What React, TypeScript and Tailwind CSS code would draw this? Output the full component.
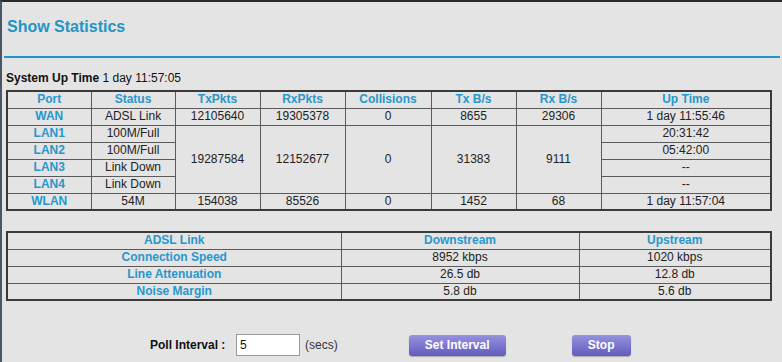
import React from "react";

const th = "border border-[#5a5a5a] text-[#2797cc] font-bold text-center h-[17px] p-0 leading-[15px]";
const td = "border border-[#5a5a5a] text-[#222] text-center h-[17px] p-0 leading-[15px]";
const port = "border border-[#5a5a5a] text-[#2797cc] font-bold text-center h-[17px] p-0 leading-[15px]";

const lanRows = [
  { port: "LAN1", status: "100M/Full", up: "20:31:42" },
  { port: "LAN2", status: "100M/Full", up: "05:42:00" },
  { port: "LAN3", status: "Link Down", up: "--" },
  { port: "LAN4", status: "Link Down", up: "--" },
];

const adsl = [
  { label: "Connection Speed", down: "8952 kbps", up: "1020 kbps" },
  { label: "Line Attenuation", down: "26.5 db", up: "12.8 db" },
  { label: "Noise Margin", down: "5.8 db", up: "5.6 db" },
];

export default function App() {
  return (
    <div
      className="w-[782px] h-[362px] overflow-hidden bg-[#e4e4e4] border-t-2 border-l-2 border-t-[#2a2a2a] border-l-[#4a5566] text-[12px]"
      style={{ fontFamily: '"Liberation Sans", Arial, sans-serif' }}
    >
      <div className="h-[54px] pl-[5px] pt-[15px]">
        <h1 className="text-[16px] font-bold text-[#2394c4] leading-[20px]">Show Statistics</h1>
      </div>
      <div className="ml-[2px] mr-[2px] h-[2px] bg-[#1f97c2]" />

      <div className="pl-[4px] pt-[13px]">
        <p className="leading-[14px] text-[#111]">
          <span className="font-bold">System Up Time</span> 1 day 11:57:05
        </p>

        <table className="mt-[5px] w-[766px] border-collapse border-2 border-[#3a3a3a] table-fixed">
          <colgroup>
            <col className="w-[84px]" />
            <col className="w-[84px]" />
            <col className="w-[85px]" />
            <col className="w-[85px]" />
            <col className="w-[86px]" />
            <col className="w-[85px]" />
            <col className="w-[85px]" />
            <col />
          </colgroup>
          <tbody>
            <tr>
              {["Port", "Status", "TxPkts", "RxPkts", "Collisions", "Tx B/s", "Rx B/s", "Up Time"].map((h) => (
                <th key={h} className={th}>{h}</th>
              ))}
            </tr>
            <tr>
              <td className={port}>WAN</td>
              <td className={td}>ADSL Link</td>
              <td className={td}>12105640</td>
              <td className={td}>19305378</td>
              <td className={td}>0</td>
              <td className={td}>8655</td>
              <td className={td}>29306</td>
              <td className={td}>1 day 11:55:46</td>
            </tr>
            {lanRows.map((r, i) => (
              <tr key={r.port}>
                <td className={port}>{r.port}</td>
                <td className={td}>{r.status}</td>
                {i === 0 && (
                  <>
                    <td rowSpan={4} className={td}>19287584</td>
                    <td rowSpan={4} className={td}>12152677</td>
                    <td rowSpan={4} className={td}>0</td>
                    <td rowSpan={4} className={td}>31383</td>
                    <td rowSpan={4} className={td}>9111</td>
                  </>
                )}
                <td className={td}>{r.up}</td>
              </tr>
            ))}
            <tr>
              <td className={port}>WLAN</td>
              <td className={td}>54M</td>
              <td className={td}>154038</td>
              <td className={td}>85526</td>
              <td className={td}>0</td>
              <td className={td}>1452</td>
              <td className={td}>68</td>
              <td className={td}>1 day 11:57:04</td>
            </tr>
          </tbody>
        </table>

        <table className="mt-[20px] w-[766px] border-collapse border-2 border-[#3a3a3a] table-fixed">
          <colgroup>
            <col className="w-[334px]" />
            <col className="w-[238px]" />
            <col />
          </colgroup>
          <tbody>
            <tr>
              <th className={th}>ADSL Link</th>
              <th className={th}>Downstream</th>
              <th className={th}>Upstream</th>
            </tr>
            {adsl.map((r) => (
              <tr key={r.label}>
                <td className={port}>{r.label}</td>
                <td className={td}>{r.down}</td>
                <td className={td}>{r.up}</td>
              </tr>
            ))}
          </tbody>
        </table>

        <div className="mt-[33px] flex items-center">
          <span className="ml-[144px] w-[86px] font-bold text-[#111]">Poll Interval :</span>
          <input
            defaultValue="5"
            className="w-[64px] h-[22px] bg-white border border-[#9a9a9a] px-[3px] text-[12px] text-[#111] outline-none"
          />
          <span className="ml-[5px] text-[#333]">(secs)</span>
          <button className="ml-[71px] w-[97px] h-[21px] rounded-[3px] bg-gradient-to-b from-[#9793e0] to-[#625bbb] text-white font-bold text-[12px] shadow-[0_1px_1px_rgba(0,0,0,0.25)]">
            Set Interval
          </button>
          <button className="ml-[66px] w-[59px] h-[21px] rounded-[3px] bg-gradient-to-b from-[#9793e0] to-[#625bbb] text-white font-bold text-[12px] shadow-[0_1px_1px_rgba(0,0,0,0.25)]">
            Stop
          </button>
        </div>
      </div>
    </div>
  );
}
